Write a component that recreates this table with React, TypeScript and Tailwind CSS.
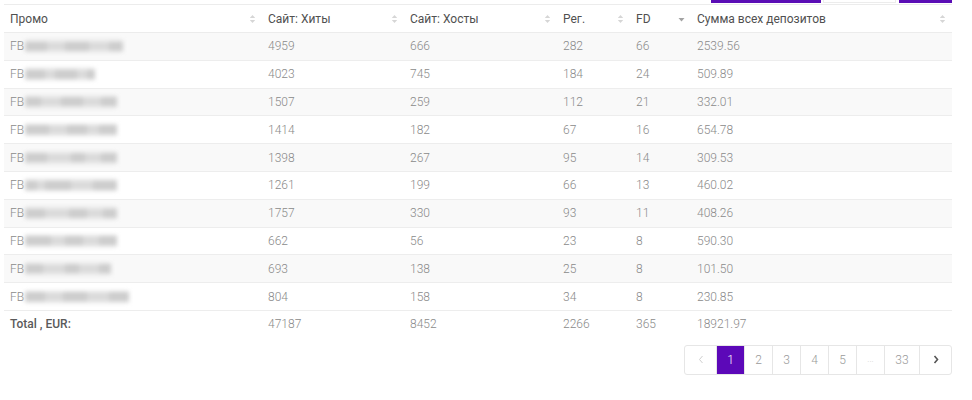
import React from 'react';

interface Row {
  blur: number[];
  hits: number;
  hosts: number;
  reg: number;
  fd: number;
  sum: string;
}

const rows: Row[] = [
  { blur: [22, 18, 24, 20, 14], hits: 4959, hosts: 666, reg: 282, fd: 66, sum: '2539.56' },
  { blur: [20, 10, 22, 10, 8], hits: 4023, hosts: 745, reg: 184, fd: 24, sum: '509.89' },
  { blur: [16, 20, 22, 18, 16], hits: 1507, hosts: 259, reg: 112, fd: 21, sum: '332.01' },
  { blur: [24, 18, 20, 12, 18], hits: 1414, hosts: 182, reg: 67, fd: 16, sum: '654.78' },
  { blur: [22, 24, 14, 16, 16], hits: 1398, hosts: 267, reg: 95, fd: 14, sum: '309.53' },
  { blur: [12, 8, 26, 22, 24], hits: 1261, hosts: 199, reg: 66, fd: 13, sum: '460.02' },
  { blur: [20, 24, 18, 16, 14], hits: 1757, hosts: 330, reg: 93, fd: 11, sum: '408.26' },
  { blur: [26, 14, 18, 16, 18], hits: 662, hosts: 56, reg: 23, fd: 8, sum: '590.30' },
  { blur: [18, 22, 14, 20, 12], hits: 693, hosts: 138, reg: 25, fd: 8, sum: '101.50' },
  { blur: [20, 18, 24, 22, 20], hits: 804, hosts: 158, reg: 34, fd: 8, sum: '230.85' },
];

const SortIcon = ({ active }: { active?: boolean }) =>
  active ? (
    <svg width="7" height="10" viewBox="0 0 7 10" className="shrink-0">
      <path d="M0.5 4 L6.5 4 L3.5 7.5 Z" fill="#a3a3a3" />
    </svg>
  ) : (
    <svg width="7" height="10" viewBox="0 0 7 10" className="shrink-0">
      <path d="M0.8 4 L6.2 4 L3.5 1 Z" fill="#d6d6d6" />
      <path d="M0.8 6 L6.2 6 L3.5 9 Z" fill="#d6d6d6" />
    </svg>
  );

const cols = [
  { label: 'Промо', w: 'w-[258px]' },
  { label: 'Сайт: Хиты', w: 'w-[142px]' },
  { label: 'Сайт: Хосты', w: 'w-[153px]' },
  { label: 'Рег.', w: 'w-[73px]' },
  { label: 'FD', w: 'w-[61px]', active: true },
  { label: 'Сумма всех депозитов', w: 'flex-1' },
];

// blurred-out promo names
const Masked = ({ parts }: { parts: number[] }) => (
  <span className="ml-[1px] flex h-[12px] items-center bg-[#e4e4e4] blur-[2px]">
    {parts.map((p, i) => (
      <span
        key={i}
        className={i % 2 === 0 ? 'h-[9px] bg-[#cdcdcd]' : 'h-[7px] bg-[#dadada]'}
        style={{ width: p }}
      />
    ))}
  </span>
);

const Cell = ({ w, children, className = '' }: { w: string; children: React.ReactNode; className?: string }) => (
  <div className={`${w} flex items-center px-[6px] ${className}`}>{children}</div>
);

export default function App() {
  const pages = ['1', '2', '3', '4', '5', '...', '33'];
  return (
    <div className="h-[400px] w-[972px] bg-white pl-[4px] pr-[20px] font-['Roboto',sans-serif] text-[12px]">
      {/* cut-off action buttons */}
      <div className="flex h-[4px] items-start justify-end">
        <div className="h-[3px] w-[110px] bg-[#5a0db5]" />
        <div className="ml-[2px] h-[3px] w-[73px] border-x border-b border-[#ececec] bg-white" />
        <div className="ml-[3px] h-[3px] w-[53px] bg-[#5a0db5]" />
      </div>

      <div className="border-t border-[#ececec]">
        <div className="flex h-[28px] border-b border-[#ececec] text-[#505050]">
          {cols.map((c) => (
            <Cell key={c.label} w={c.w} className="justify-between">
              <span>{c.label}</span>
              <SortIcon active={c.active} />
            </Cell>
          ))}
        </div>

        {rows.map((r, i) => (
          <div
            key={i}
            className={`flex h-[27.8px] border-b border-[#ededed] font-light text-[#8a8a8a] ${i % 2 === 0 ? 'bg-[#f9f9f9]' : 'bg-white'}`}
          >
            <Cell w="w-[258px]">
              <span>FB</span>
              <Masked parts={r.blur} />
            </Cell>
            <Cell w="w-[142px]">{r.hits}</Cell>
            <Cell w="w-[153px]">{r.hosts}</Cell>
            <Cell w="w-[73px]">{r.reg}</Cell>
            <Cell w="w-[61px]">{r.fd}</Cell>
            <Cell w="flex-1">{r.sum}</Cell>
          </div>
        ))}

        <div className="flex h-[26px] text-[#8a8a8a]">
          <Cell w="w-[258px]" className="font-medium text-[#5a5a5a]">
            Total , EUR:
          </Cell>
          <Cell w="w-[142px]" className="font-light">47187</Cell>
          <Cell w="w-[153px]" className="font-light">8452</Cell>
          <Cell w="w-[73px]" className="font-light">2266</Cell>
          <Cell w="w-[61px]" className="font-light">365</Cell>
          <Cell w="flex-1" className="font-light">18921.97</Cell>
        </div>
      </div>

      <div className="mt-[8px] flex justify-end">
        <div className="flex h-[30px] overflow-hidden rounded-[3px] border border-[#e6e6e6] text-[12px] font-light text-[#9a9a9a]">
          <div className="flex w-[31px] items-center justify-center text-[#cfcfcf]">
            <svg width="6" height="9" viewBox="0 0 6 9">
              <path d="M4.5 1 L1.5 4.5 L4.5 8" stroke="currentColor" strokeWidth="1" fill="none" />
            </svg>
          </div>
          {pages.map((p) => (
            <div
              key={p}
              className={`flex items-center justify-center border-l border-[#e6e6e6] ${p === '33' ? 'w-[35px]' : 'w-[28px]'} ${p === '1' ? 'bg-[#5c08b8] text-white' : ''} ${p === '...' ? 'text-[9px] text-[#d0d0d0]' : ''}`}
            >
              {p}
            </div>
          ))}
          <div className="flex w-[32px] items-center justify-center border-l border-[#e6e6e6] text-[#555]">
            <svg width="6" height="9" viewBox="0 0 6 9">
              <path d="M1.5 1 L4.5 4.5 L1.5 8" stroke="currentColor" strokeWidth="1.6" fill="none" />
            </svg>
          </div>
        </div>
      </div>
    </div>
  );
}
